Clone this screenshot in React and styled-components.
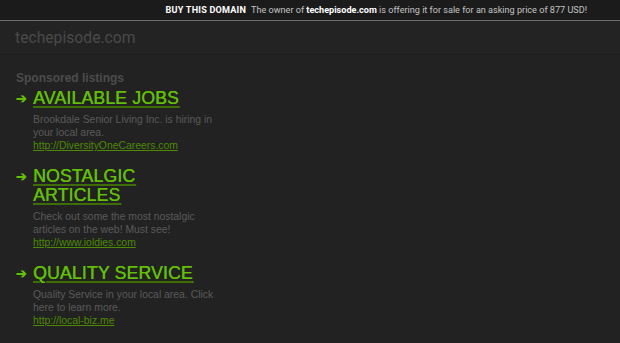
import React from "react";
import styled, { createGlobalStyle } from "styled-components";

const Global = createGlobalStyle`
  html, body {
    margin: 0;
    padding: 0;
    background: #222222;
    font-family: "Liberation Sans", Arial, sans-serif;
  }
`;

const TopBar = styled.div`
  height: 20px;
  background: #1b1b1b;
  border-bottom: 1px solid #6e6e6e;
  display: flex;
  align-items: center;
  justify-content: flex-end;
  padding-right: 33px;
  font-family: Roboto, "Liberation Sans", sans-serif;
  font-size: 9.1px;
  color: #c4c4c4;
  white-space: nowrap;

  b {
    color: #ffffff;
    font-weight: 700;
  }

  .buy {
    margin-right: 5px;
    letter-spacing: 0.2px;
  }
`;

const Header = styled.div`
  height: 33px;
  background: #232323;
  border-bottom: 1px solid #1d1d1d;
  display: flex;
  align-items: center;
  padding-left: 15px;
  font-family: Roboto, "Liberation Sans", sans-serif;
  font-size: 15.7px;
  color: #4a4a4a;
`;

const Content = styled.div`
  padding: 16px 16px 0 16px;
`;

const Sponsored = styled.div`
  font-size: 12px;
  font-weight: 700;
  color: #4c4c4c;
  margin-bottom: 4px;
`;

const Listing = styled.div`
  display: flex;
  align-items: flex-start;
  margin-bottom: 15px;
`;

const Arrow = styled.span`
  width: 17px;
  flex: none;
  color: #62c000;
  font-size: 13px;
  font-weight: 700;
  line-height: 19px;
`;

const Body = styled.div`
  display: flex;
  flex-direction: column;
`;

const Title = styled.a`
  font-size: 17.6px;
  line-height: 19px;
  color: #62c000;
  text-shadow: 0.4px 0 0 #62c000;
  letter-spacing: 0.2px;
  text-decoration: underline;
  text-decoration-color: #3f6e00;
  text-decoration-thickness: 2px;
  text-underline-offset: 2px;
  width: ${(p) => p.$width || "auto"};
  margin-bottom: 5px;
`;

const Desc = styled.div`
  font-size: 10.4px;
  line-height: 13px;
  color: #5a5a5a;
  width: 190px;
`;

const Url = styled.a`
  font-size: 10.4px;
  line-height: 13px;
  color: #4d8a00;
  text-decoration: underline;
`;

const items = [
  {
    title: "AVAILABLE JOBS",
    desc: "Brookdale Senior Living Inc. is hiring in your local area.",
    url: "http://DiversityOneCareers.com",
  },
  {
    title: "NOSTALGIC ARTICLES",
    desc: "Check out some the most nostalgic articles on the web! Must see!",
    url: "http://www.ioldies.com",
    width: "110px",
  },
  {
    title: "QUALITY SERVICE",
    desc: "Quality Service in your local area. Click here to learn more.",
    url: "http://local-biz.me",
  },
];

export default function App() {
  return (
    <>
      <Global />
      <TopBar>
        <b className="buy">BUY THIS DOMAIN</b>
        <span>
          The owner of <b>techepisode.com</b> is offering it for sale for an asking price of 877 USD!
        </span>
      </TopBar>
      <Header>techepisode.com</Header>
      <Content>
        <Sponsored>Sponsored listings</Sponsored>
        {items.map((it) => (
          <Listing key={it.title}>
            <Arrow>➔</Arrow>
            <Body>
              <Title href="#" $width={it.width}>{it.title}</Title>
              <Desc>{it.desc}</Desc>
              <Url href="#">{it.url}</Url>
            </Body>
          </Listing>
        ))}
      </Content>
    </>
  );
}
